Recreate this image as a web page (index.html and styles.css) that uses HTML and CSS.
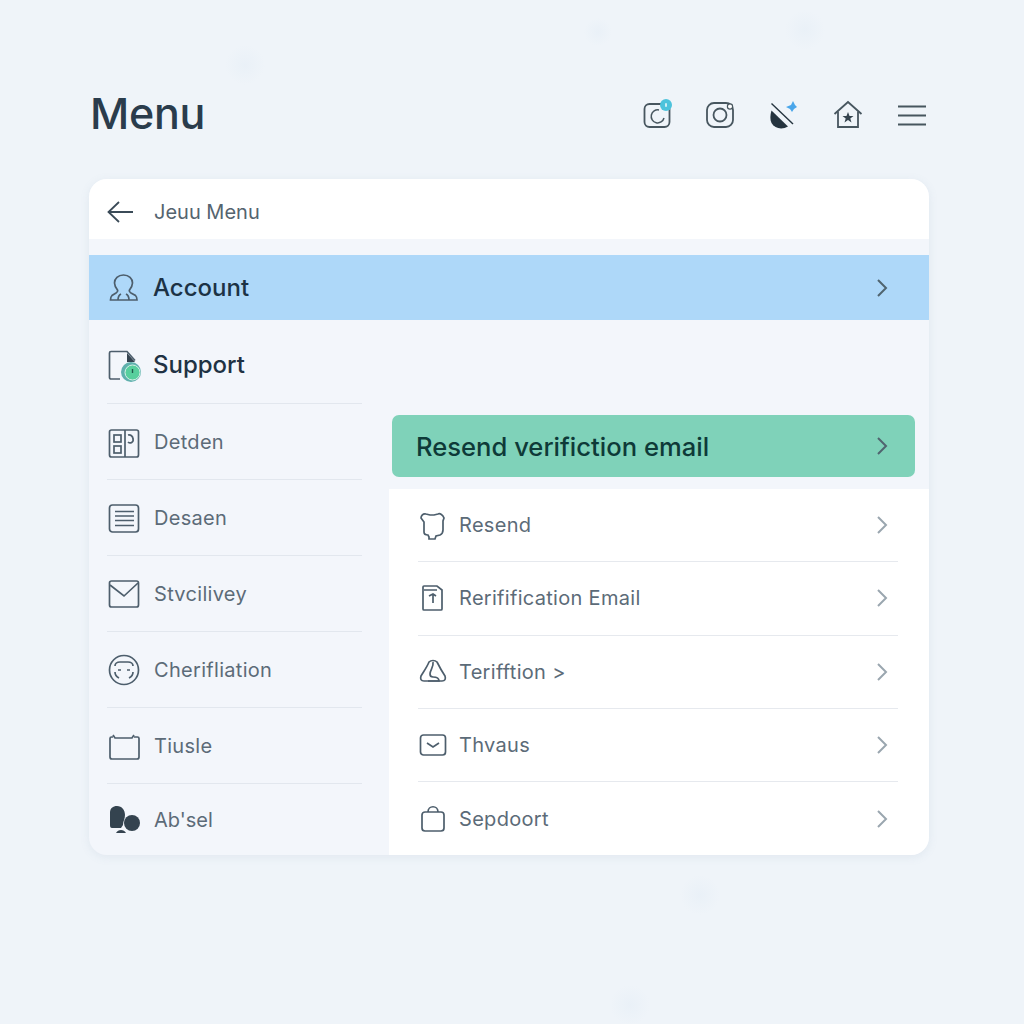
FILE: index.html
```html
<!DOCTYPE html>
<html lang="en">
<head>
    <meta charset="UTF-8">
    <meta name="viewport" content="width=device-width, initial-scale=1.0">
    <title>Menu</title>
    <link rel="stylesheet" href="styles.css">
</head>
<body>
    <div class="page">
        <header class="topbar">
            <h1>Menu</h1>
            <div class="top-icons">
                <svg class="top-icon" viewBox="0 0 32 32"><rect x="4.500" y="5" width="25" height="23" rx="5"/><path class="thin" d="M19 11a6.500 6.500 0 1 0 5 8"/><circle class="badge" cx="26" cy="6" r="6"/><rect class="badge-mark" x="25" y="4" width="2" height="4" rx="1"/></svg>
                <svg class="top-icon" viewBox="0 0 32 32"><rect x="3" y="4" width="26" height="24" rx="7"/><circle cx="16" cy="16" r="6.500"/><circle class="white-dot" cx="26" cy="7.500" r="2.600"/></svg>
                <svg class="top-icon" viewBox="0 0 32 32"><path class="dish" d="M3.500 11.500L20 27.500C14 31 6.500 29.500 3.500 24C2 21 2 16 3.500 11.500z"/><path class="dark-line" d="M3.500 4.500L25 25"/><path class="spark" d="M18 8L23 6L25 2L27 6L29 8L26 10L24 13L22 10z"/></svg>
                <svg class="top-icon" viewBox="0 0 32 32"><path d="M2.500 15L16 3L29.500 15"/><path d="M6 12.500V28H26V12.500"/><path class="star" d="M16 13L17.500 17H21.500L18.300 19.400L19.500 23.500L16 21L12.500 23.500L13.700 19.400L10.500 17H14.500z"/></svg>
                <svg class="top-icon" viewBox="0 0 32 32"><path d="M2 7.500H30M2 16.500H30M2 25.500H30"/></svg>
            </div>
        </header>

        <main class="card">
            <div class="card-head">
                <svg class="back-icon" viewBox="0 0 28 24"><path d="M13 2L2.500 12L13 22M2.500 12H27"/></svg>
                <span>Jeuu Menu</span>
            </div>

            <a class="account-row">
                <svg class="icon" viewBox="0 0 34 34"><path d="M16.500 4c-5.500 0-9 3.500-9 8 0 3 1.500 5 3 7 .5 1 0 2-1.500 3L5 24.500c-1 1-1.500 3-1.500 4.500H30c0-1.500-.5-3.500-1.500-4.500L24 22c-1.500-1-2-2-1.500-3 1.500-2 3-4 3-7 0-4.500-3.500-8-9-8z"/><path d="M11 29c0-3 1-5 3-6M22 29c0-3-1-5-3-6"/></svg>
                <span>Account</span>
                <svg class="chev chev-dark" viewBox="0 0 12 20"><path d="M2 2L10 10L2 18"/></svg>
            </a>

            <div class="card-body">
                <nav class="side">
                    <a class="side-row side-main">
                        <svg class="icon" viewBox="0 0 34 34"><path d="M13 31H4a1.500 1.500 0 0 1-1.500-1.500V5A1.500 1.500 0 0 1 4 3.500H20l8 9"/><path class="dark-fill" d="M20 5l8 9h-8z"/><circle class="teal-ring" cx="24" cy="24" r="10"/><circle class="green-dot" cx="25.500" cy="24.500" r="7.500"/><path class="white-line" d="M25.500 21v4"/></svg>
                        <span>Support</span>
                    </a>
                    <a class="side-row">
                        <svg class="icon" viewBox="0 0 34 34"><rect x="2.500" y="5" width="29" height="27" rx="2"/><path d="M18 5v27"/><rect x="7" y="10" width="7" height="7"/><rect x="7" y="21" width="7" height="7"/><path d="M21 10a4 4 0 0 1 5 4 3 3 0 0 1-5 3"/></svg>
                        <span>Detden</span>
                    </a>
                    <a class="side-row">
                        <svg class="icon" viewBox="0 0 34 34"><rect x="2.500" y="4" width="29" height="27" rx="3"/><path d="M8 10.500H27M8 15H27M8 19.500H27M8 24.500H27"/></svg>
                        <span>Desaen</span>
                    </a>
                    <a class="side-row">
                        <svg class="icon" viewBox="0 0 34 34"><rect x="2.500" y="4" width="29" height="26" rx="2"/><path d="M3 8L17 19L31 6"/></svg>
                        <span>Stvcilivey</span>
                    </a>
                    <a class="side-row">
                        <svg class="icon" viewBox="0 0 34 34"><circle cx="17" cy="17" r="14.500"/><path d="M13 9c-3 0-5 2-5 4M21 9c3 0 5 2 5 4M8 19c0 3 2 5 4 6M26 19c0 3-2 5-4 6M13 9h8M14 17h-3M23 17h-3"/></svg>
                        <span>Cherifliation</span>
                    </a>
                    <a class="side-row">
                        <svg class="icon" viewBox="0 0 34 34"><path d="M6 8H4.500A1.500 1.500 0 0 0 3 9.500V28a2 2 0 0 0 2 2h25a2 2 0 0 0 2-2V9.500A1.500 1.500 0 0 0 30.500 8H27"/><path d="M6 6l2 3H25l2-3"/></svg>
                        <span>Tiusle</span>
                    </a>
                    <a class="side-row side-last">
                        <svg class="icon" viewBox="0 0 34 34"><path class="dark-fill" d="M3 10C3 5 6 3 10 3C15 3 18 7 18 12C18 16 16 18 16 22L14 25H5C3.500 25 3 24 3 22z"/><circle class="dark-fill" cx="25" cy="20" r="8"/><path class="dark-fill" d="M9 30C11 26 17 26 19 30z"/></svg>
                        <span>Ab'sel</span>
                    </a>
                </nav>

                <section class="detail">
                    <a class="resend-btn">
                        <span>Resend verifiction email</span>
                        <svg class="chev chev-dark" viewBox="0 0 12 20"><path d="M2 2L10 10L2 18"/></svg>
                    </a>
                    <div class="detail-list">
                        <a class="detail-row">
                            <svg class="icon-sm" viewBox="0 0 30 30"><path d="M8 4C5 3 3 6 3 8L6 12V22C6 24 8 25 10 25L11 27V29H17L18 26L22 25C24 24 25 22 25 20V11L26 8C25 5 22 3 20 4L16 5H12z"/></svg>
                            <span>Resend</span>
                            <svg class="chev" viewBox="0 0 12 20"><path d="M2 2L10 10L2 18"/></svg>
                        </a>
                        <a class="detail-row">
                            <svg class="icon-sm" viewBox="0 0 30 30"><path d="M6 3h13l5 4v19a1 1 0 0 1-1 1H6a1 1 0 0 1-1-1V4a1 1 0 0 1 1-1z"/><path d="M6 7h13M11 13l4-2 3 2M15 11v9"/></svg>
                            <span>Rerifification Email</span>
                            <svg class="chev" viewBox="0 0 12 20"><path d="M2 2L10 10L2 18"/></svg>
                        </a>
                        <a class="detail-row">
                            <svg class="icon-sm" viewBox="0 0 30 30"><path d="M11 5c2-2 6-2 8 0 2 4 4 8 8 14 1 3 0 5-3 5H6c-3 0-4-2-3-5 3-5 6-9 8-14z"/><path d="M15 5c1 5-3 8-3 12 0 2 1 3 3 3 3 0 6 1 6 4H10"/></svg>
                            <span>Terifftion &gt;</span>
                            <svg class="chev" viewBox="0 0 12 20"><path d="M2 2L10 10L2 18"/></svg>
                        </a>
                        <a class="detail-row">
                            <svg class="icon-sm" viewBox="0 0 30 30"><rect x="2.500" y="5" width="25" height="20" rx="3"/><path d="M9 13l6 4 6-4"/></svg>
                            <span>Thvaus</span>
                            <svg class="chev" viewBox="0 0 12 20"><path d="M2 2L10 10L2 18"/></svg>
                        </a>
                        <a class="detail-row">
                            <svg class="icon-sm" viewBox="0 0 30 30"><rect x="4" y="8" width="22" height="19" rx="3"/><path d="M10 8c0-7 10-7 10 0"/></svg>
                            <span>Sepdoort</span>
                            <svg class="chev" viewBox="0 0 12 20"><path d="M2 2L10 10L2 18"/></svg>
                        </a>
                    </div>
                </section>
            </div>
        </main>
    </div>
</body>
</html>
```

FILE: styles.css
```css
body {
    margin: 0;
    height: 1024px;
    overflow: hidden;
    font-family: Inter, "Liberation Sans", sans-serif;
    color: #5c6b78;
    background-color: #eff4f9;
    background-image:
        radial-gradient(circle at 245px 65px, rgba(205, 222, 238, 0.16) 0, rgba(205, 222, 238, 0) 20px),
        radial-gradient(circle at 805px 30px, rgba(205, 222, 238, 0.16) 0, rgba(205, 222, 238, 0) 20px),
        radial-gradient(circle at 598px 32px, rgba(205, 222, 238, 0.16) 0, rgba(205, 222, 238, 0) 14px),
        radial-gradient(circle at 700px 895px, rgba(205, 222, 238, 0.16) 0, rgba(205, 222, 238, 0) 20px),
        radial-gradient(circle at 630px 1005px, rgba(205, 222, 238, 0.16) 0, rgba(205, 222, 238, 0) 20px);
}

.page {
    width: 840px;
    margin-left: 89px;
    padding-top: 85px;
}

.topbar {
    display: flex;
    align-items: center;
    justify-content: space-between;
    height: 60px;
    margin-bottom: 34px;
    padding: 0 1px 0 1px;
}

h1 {
    margin: 0 0 4px;
    font-size: 43px;
    font-weight: 550;
    line-height: 1;
    letter-spacing: -0.3px;
    color: #2a3c4c;
}

.top-icons {
    display: flex;
    gap: 32px;
}

.top-icon {
    width: 32px;
    height: 32px;
    fill: none;
    stroke: #47565f;
    stroke-width: 1.8;
}

.top-icon .thin {
    stroke-width: 1.5;
}

.top-icon .badge {
    fill: #4dc3dc;
    stroke: none;
}

.top-icon .badge-mark {
    fill: #cfeef5;
    stroke: none;
}

.top-icon .white-dot {
    fill: #fff;
    stroke-width: 1.2;
}

.top-icon .dish {
    fill: #25343f;
    stroke: none;
}

.top-icon .dark-line {
    stroke: #25343f;
    stroke-width: 1.4;
}

.top-icon .spark {
    fill: #4aa6ea;
    stroke: none;
}

.top-icon .star {
    fill: #34434e;
    stroke: none;
}

.card {
    height: 676px;
    overflow: hidden;
    border-radius: 18px;
    background-color: #f3f6fb;
    box-shadow: 0 2px 10px rgba(120, 145, 175, 0.12);
}

.card-head {
    display: flex;
    align-items: center;
    gap: 20px;
    box-sizing: border-box;
    height: 60px;
    padding: 5px 0 0 17px;
    background-color: #fff;
    font-size: 20px;
    color: #55646f;
}

.back-icon {
    width: 28px;
    height: 24px;
    fill: none;
    stroke: #3b4b58;
    stroke-width: 1.8;
}

.account-row {
    display: flex;
    align-items: center;
    height: 65px;
    margin-top: 16px;
    padding: 0 41px 0 18px;
    background-color: #aed8f9;
    font-size: 24px;
    font-weight: 500;
    color: #1c3245;
}

.account-row span {
    flex: 1;
    margin-left: 12px;
}

.icon,
.icon-sm {
    flex: none;
    fill: none;
    stroke: #4d5e6c;
    stroke-width: 1.7;
}

.icon {
    width: 34px;
    height: 34px;
}

.icon-sm {
    width: 30px;
    height: 30px;
}

.chev {
    flex: none;
    width: 12px;
    height: 20px;
    fill: none;
    stroke: #9aa6af;
    stroke-width: 2;
}

.chev-dark {
    stroke: #50646f;
}

.card-body {
    display: flex;
    height: 535px;
}

.side {
    flex: none;
    box-sizing: border-box;
    width: 300px;
    padding: 0 27px 0 18px;
}

.side-row {
    display: flex;
    align-items: center;
    gap: 13px;
    box-sizing: border-box;
    height: 76px;
    border-bottom: 1px solid #e2e7ee;
    font-size: 20px;
    letter-spacing: 0.3px;
}

.side-main {
    height: 84px;
    padding-top: 6px;
    font-size: 24px;
    font-weight: 500;
    letter-spacing: 0;
    color: #1f3243;
}

.side-main .icon {
    margin-right: -1px;
}

.side-last {
    height: 72px;
    border-bottom: none;
    letter-spacing: 0;
}

.dark-fill {
    fill: #34434f;
    stroke: none;
}

.teal-ring {
    fill: #5fb0ad;
    stroke: none;
}

.green-dot {
    fill: #57cf9d;
    stroke: #d6f2e6;
    stroke-width: 1;
}

.white-line {
    stroke: #1f5c4c;
    stroke-width: 1.4;
}

.detail {
    flex: 1;
    padding-top: 95px;
}

.resend-btn {
    display: flex;
    align-items: center;
    justify-content: space-between;
    box-sizing: border-box;
    width: 523px;
    height: 62px;
    margin-left: 3px;
    padding: 0 27px 0 24px;
    border-radius: 7px;
    background-color: #7fd2b9;
    font-size: 25.600px;
    font-weight: 500;
    color: #0e3a38;
}

.detail-list {
    box-sizing: border-box;
    height: 366px;
    margin-top: 12px;
    padding: 0 31px 0 29px;
    background-color: #fff;
}

.detail-row {
    display: flex;
    align-items: center;
    gap: 11px;
    box-sizing: border-box;
    height: 73.250px;
    border-bottom: 1px solid #e6e9ee;
    padding-right: 10px;
    font-size: 20px;
    letter-spacing: 0.3px;
}

.detail-row:last-child {
    border-bottom: none;
}

.detail-row span {
    flex: 1;
}
```
